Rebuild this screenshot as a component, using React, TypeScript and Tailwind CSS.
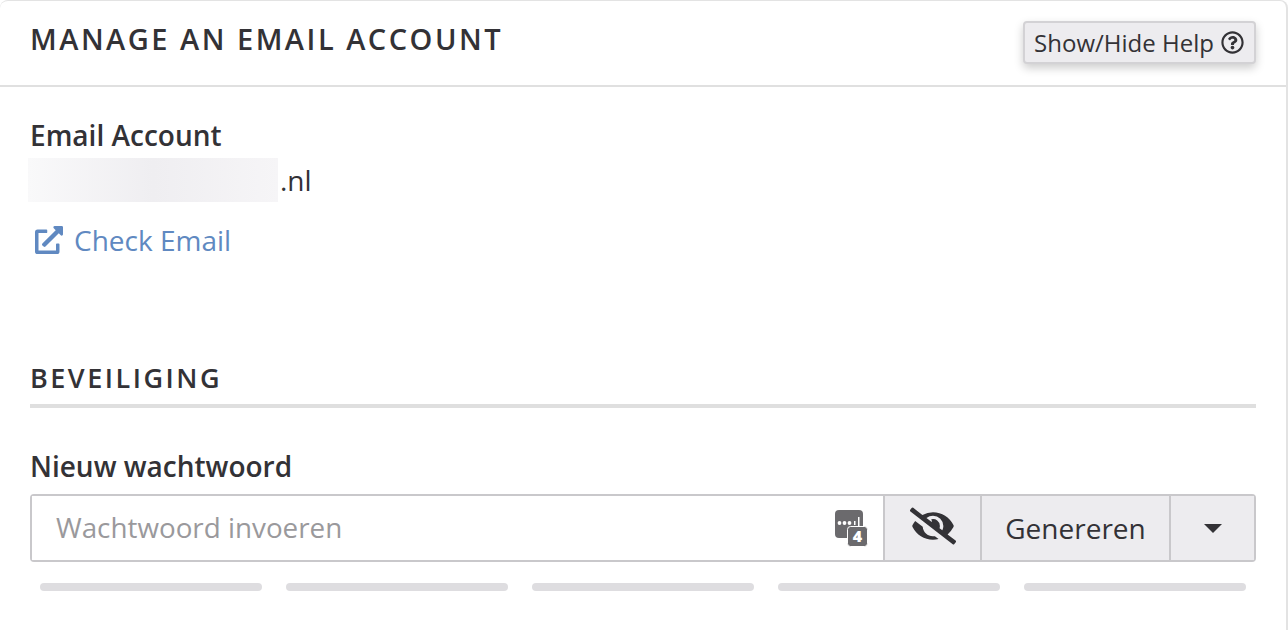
import { FaExternalLinkAlt, FaEyeSlash, FaRegQuestionCircle } from 'react-icons/fa'

function PasswordLengthIcon() {
  return (
    <svg width="34" height="38" viewBox="0 0 34 38" className="block">
      <rect x="1" y="1" width="28" height="28" rx="4" fill="#6b6a6d" />
      <circle cx="5.5" cy="14" r="1.9" fill="#fff" />
      <circle cx="10.5" cy="14" r="1.9" fill="#fff" />
      <circle cx="15.5" cy="14" r="1.9" fill="#fff" />
      <rect x="20" y="12" width="1.5" height="4" fill="#fff" />
      <rect x="24" y="8" width="1.5" height="9" fill="#fff" />
      <rect x="13.5" y="17.5" width="20" height="20" rx="3" fill="#6b6a6d" stroke="#fff" strokeWidth="1" />
      <text x="23.5" y="33" textAnchor="middle" fontSize="16" fontWeight="800" fill="#fff" fontFamily="'Open Sans', sans-serif">4</text>
    </svg>
  )
}

const meters = [0, 1, 2, 3, 4]

export default function App() {
  return (
    <div className="w-[1288px] h-[630px] bg-white text-[#333236] font-['Open_Sans',sans-serif] overflow-hidden">
      <div className="h-[630px] border-t border-r-2 border-[#e3e3e3] rounded-tr-lg rounded-tl-lg">
        <div className="h-[86px] border-b-2 border-[#e0e0e0] pl-[30px] pr-[30px] flex justify-between">
          <h1 className="mt-[18px] text-[29px] leading-[40px] font-semibold tracking-[2.5px]">MANAGE AN EMAIL ACCOUNT</h1>
          <button className="mt-[20px] ml-auto h-[43px] w-[233px] bg-[#edecef] border-2 border-[#d3d2d5] rounded text-[24px] flex items-center justify-center gap-[7px] pr-[1px] shadow-[0_4px_10px_rgba(0,0,0,0.2)]">
            Show/Hide Help
            <FaRegQuestionCircle className="text-[23px]" />
          </button>
        </div>

        <div className="px-[30px] pt-[29px] text-[28px]">
          <div className="leading-[38px] font-semibold">Email Account</div>
          <div className="mt-[4px] leading-[36px] flex items-center gap-[2px]">
            <div className="ml-[-2px] w-[250px] h-[44px] bg-gradient-to-r from-[#f9f9fa] via-[#efeef1] to-[#f6f5f7]" />
            <span>.nl</span>
          </div>
          <a className="mt-[19px] flex items-center gap-[11px] pl-[5px] leading-[38px] text-[#6089c1]">
            <FaExternalLinkAlt className="text-[28px]" />
            Check Email
          </a>

          <h2 className="mt-[100px] text-[27px] leading-[38px] font-semibold tracking-[2.5px]">BEVEILIGING</h2>
          <div className="mt-[7px] h-[4px] bg-[#dfdfdf]" />

          <div className="mt-[39px] leading-[38px] font-semibold">Nieuw wachtwoord</div>
          <div className="mt-[9px] h-[68px] flex border-2 border-[#c9c8cb] rounded">
            <div className="flex-1 flex items-center justify-between pl-[24px] pr-[15px] bg-white">
              <span className="text-[#9a999c] text-[27.8px]">Wachtwoord invoeren</span>
              <PasswordLengthIcon />
            </div>
            <div className="w-[97px] border-l-2 border-[#c9c8cb] bg-[#edecef] flex items-center justify-center">
              <FaEyeSlash className="text-[46px] mb-[4px]" />
            </div>
            <div className="w-[189px] border-l-2 border-[#c9c8cb] bg-[#edecef] flex items-center justify-center">Genereren</div>
            <div className="w-[85px] border-l-2 border-[#c9c8cb] bg-[#edecef] flex items-center justify-center">
              <div className="w-0 h-0 border-x-[9px] border-x-transparent border-t-[9px] border-t-[#333236]" />
            </div>
          </div>
          <div className="mt-[21px] px-[10px] flex gap-[24px]">
            {meters.map((m) => (
              <div key={m} className="flex-1 h-[8px] rounded-full bg-[#dedde0]" />
            ))}
          </div>
        </div>
      </div>
    </div>
  )
}
